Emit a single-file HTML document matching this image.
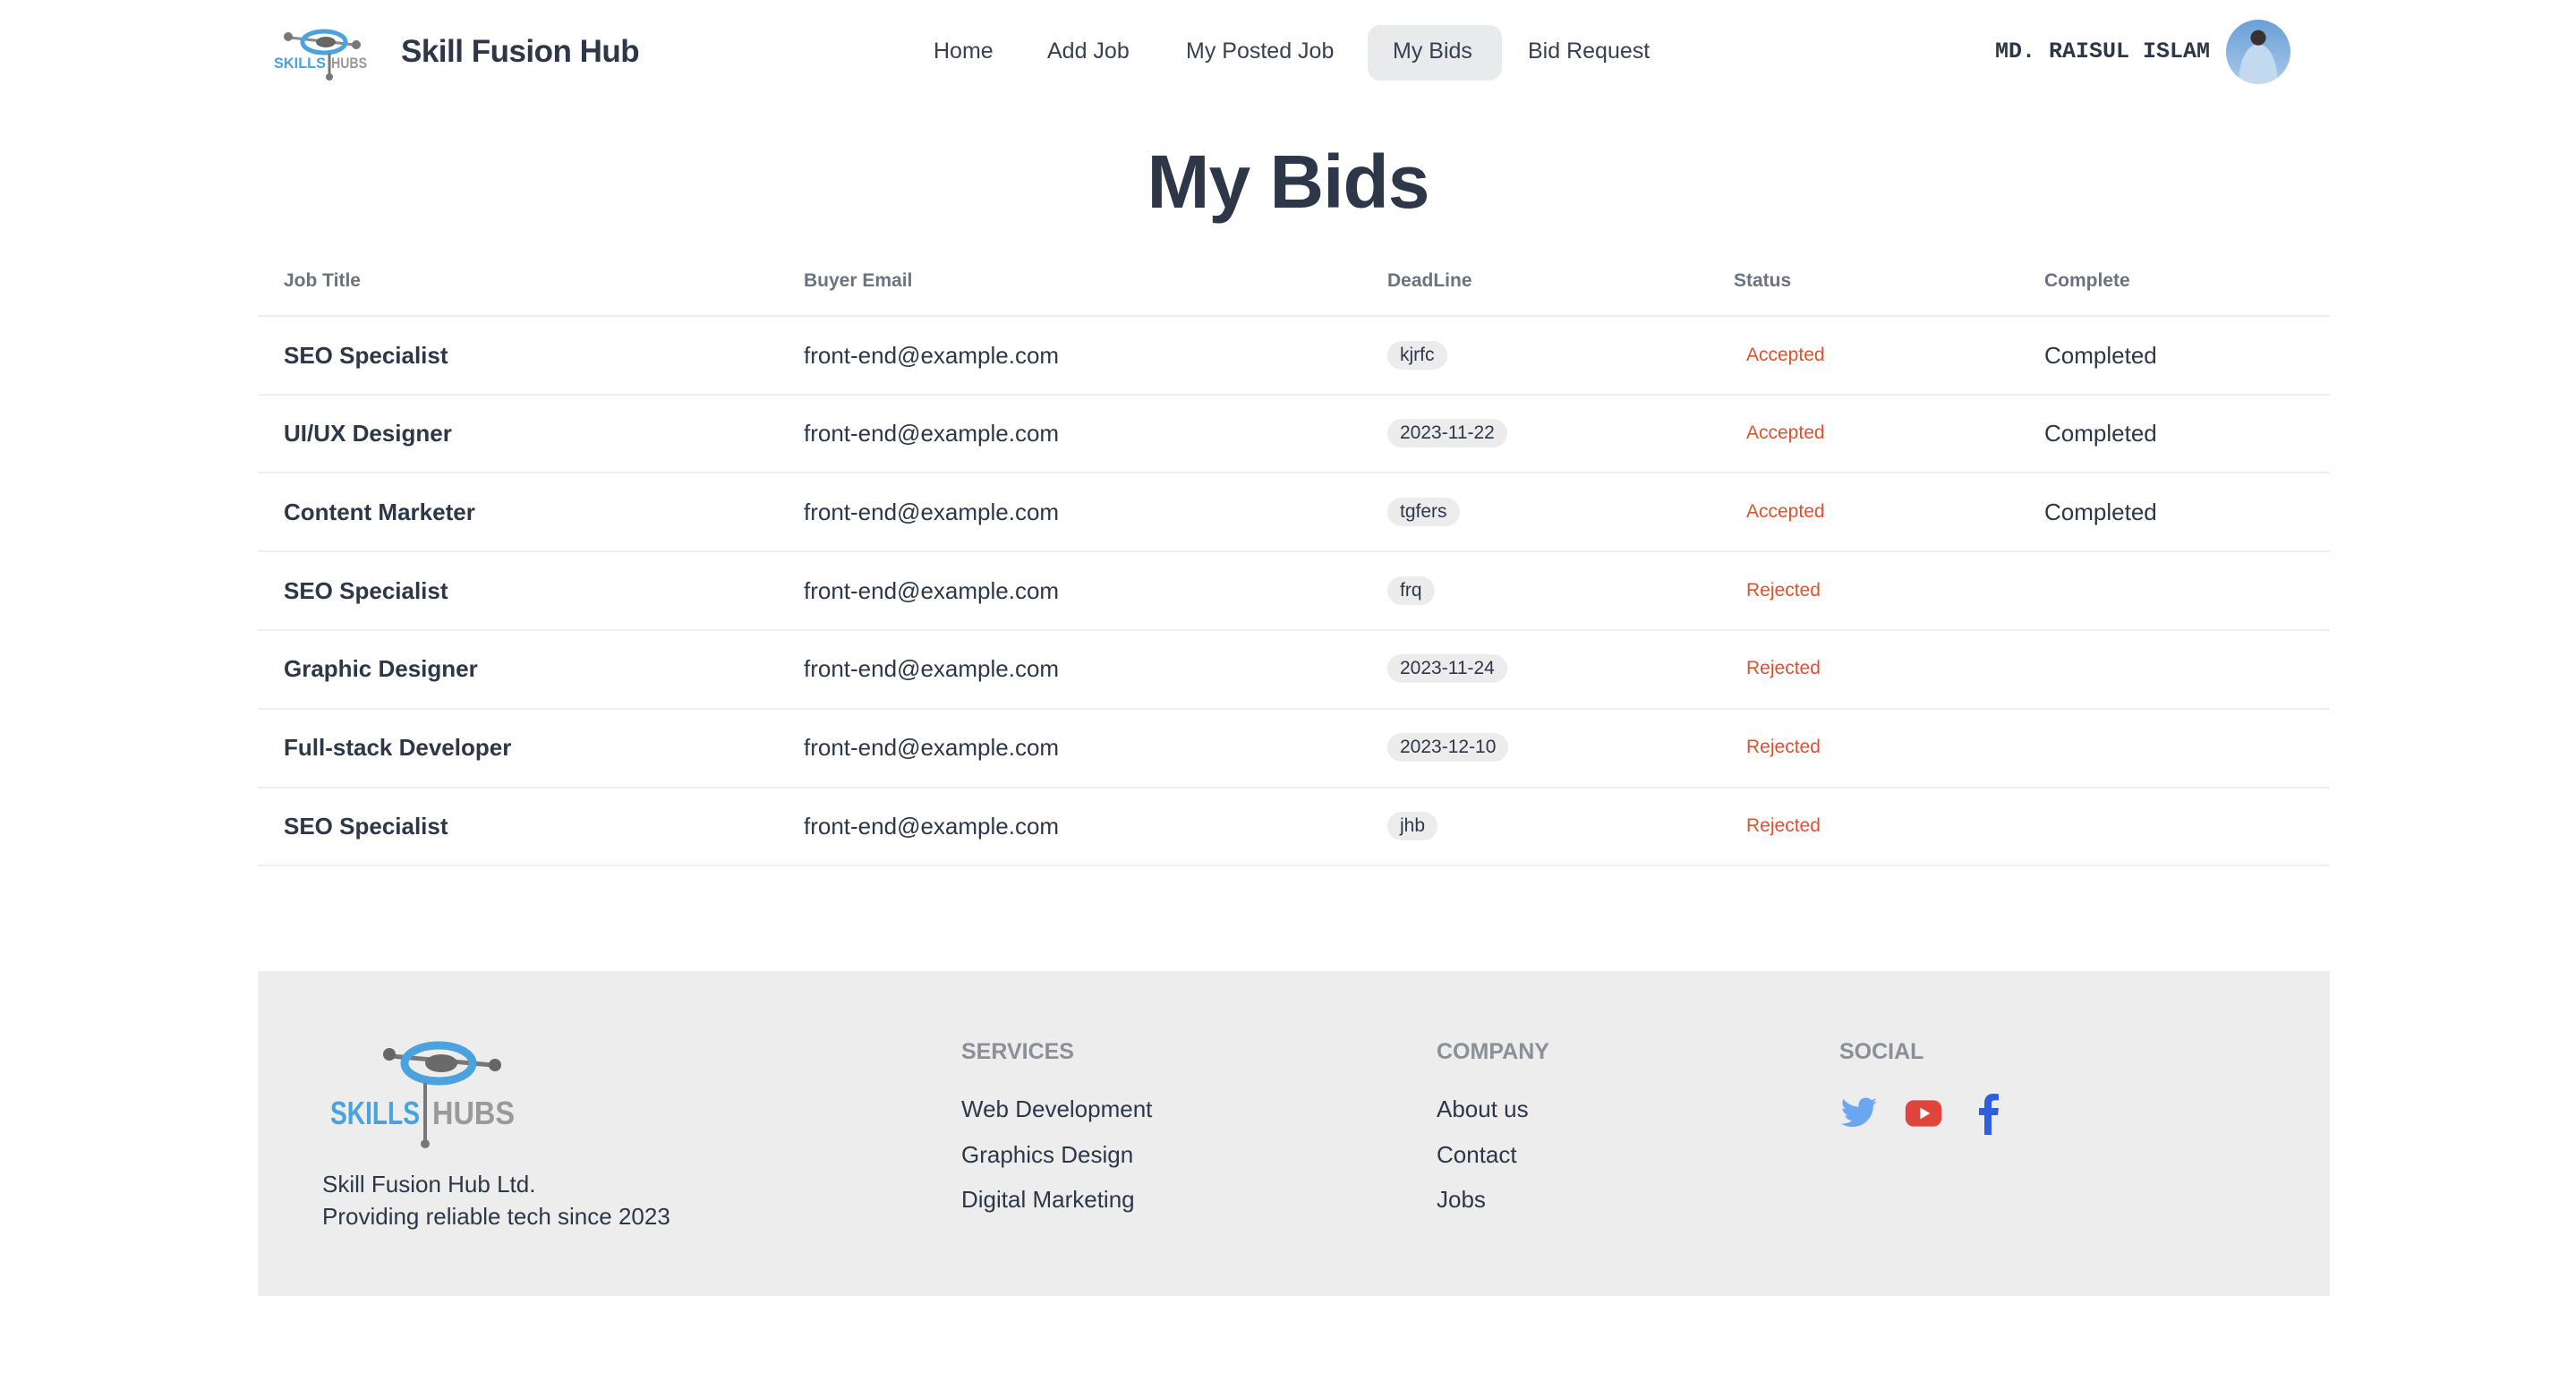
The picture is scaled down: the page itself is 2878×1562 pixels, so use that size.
<!DOCTYPE html>
<html><head><meta charset="utf-8">
<style>
*{margin:0;padding:0;box-sizing:border-box}
body{width:2878px;height:1562px;background:#fff;font-family:"Liberation Sans",Arial,sans-serif;color:#374151;position:relative;overflow:hidden}
.a{position:absolute;white-space:nowrap}
.nav{font-size:25px;top:43px;color:#374151}
.pill{left:1528px;top:28px;width:150px;height:62px;background:#e9eaec;border-radius:14px}
.hd{top:302px;font-size:21px;font-weight:bold;color:#6b7280}
.line{left:288px;width:2315px;height:2px;background:#eeeeee}
.jt{font-size:26px;font-weight:bold;color:#2d3748}
.em{font-size:26px;color:#2d3748}
.bd{font-size:21px;background:#ececec;border-radius:16px;padding:4px 14px;color:#2d3748}
.st{font-size:21px;color:#e0512f}
.fh{font-size:25px;font-weight:bold;color:#8a8f98;top:1161px}
.fl{font-size:26px;color:#2d3748}
</style></head><body>
<svg class="a" style="left:302px;top:28px" width="112" height="62" viewBox="0 0 112 62">
<line x1="22" y1="14" x2="94" y2="22" stroke="#888" stroke-width="3"/>
<circle cx="20" cy="13" r="5" fill="#777"/><circle cx="96" cy="22" r="5" fill="#777"/>
<ellipse cx="60" cy="19" rx="24" ry="12" fill="none" stroke="#4aa3de" stroke-width="5"/>
<ellipse cx="62" cy="19" rx="11" ry="6" fill="#666"/>
<line x1="66" y1="32" x2="66" y2="58" stroke="#777" stroke-width="3"/><circle cx="66" cy="58" r="4" fill="#777"/>
<text x="4" y="48" font-family="Liberation Sans" font-weight="bold" font-size="17" fill="#4aa3de" textLength="58" lengthAdjust="spacingAndGlyphs">SKILLS</text>
<text x="68" y="48" font-family="Liberation Sans" font-weight="bold" font-size="17" fill="#999" textLength="40" lengthAdjust="spacingAndGlyphs">HUBS</text>
</svg>
<div class="a" style="left:448px;top:38px;font-size:35px;font-weight:bold;color:#2d3748;letter-spacing:-0.5px">Skill Fusion Hub</div>
<div class="a pill"></div>
<div class="a nav" style="left:1043px">Home</div>
<div class="a nav" style="left:1170px">Add Job</div>
<div class="a nav" style="left:1325px">My Posted Job</div>
<div class="a nav" style="left:1556px">My Bids</div>
<div class="a nav" style="left:1707px">Bid Request</div>
<div class="a" style="left:2229px;top:43px;font-family:'Liberation Mono',monospace;font-weight:bold;font-size:25px;color:#2d3748">MD. RAISUL ISLAM</div>
<div class="a" style="left:2487px;top:22px;width:72px;height:72px;border-radius:50%;background:radial-gradient(circle at 50% 28%,#3a3030 0 13%,transparent 14%),radial-gradient(ellipse at 50% 95%,#c3d9f0 0 42%,transparent 43%),linear-gradient(#6a9fd6,#a9c9ea)"></div>

<div class="a" style="left:0;width:2878px;text-align:center;top:155px;font-size:84px;font-weight:bold;color:#2d3748;letter-spacing:-1px">My Bids</div>

<div class="a hd" style="left:317px">Job Title</div>
<div class="a hd" style="left:898px">Buyer Email</div>
<div class="a hd" style="left:1550px">DeadLine</div>
<div class="a hd" style="left:1937px">Status</div>
<div class="a hd" style="left:2284px">Complete</div>

<div class="a line" style="top:352px"></div>
<div class="a line" style="top:440px"></div>
<div class="a line" style="top:527px"></div>
<div class="a line" style="top:615px"></div>
<div class="a line" style="top:703px"></div>
<div class="a line" style="top:791px"></div>
<div class="a line" style="top:879px"></div>
<div class="a line" style="top:966px"></div>

<div class="a jt" style="left:317px;top:382px">SEO Specialist</div><div class="a em" style="left:898px;top:382px">front-end@example.com</div><div class="a bd" style="left:1550px;top:381px">kjrfc</div><div class="a st" style="left:1951px;top:385px">Accepted</div><div class="a em" style="left:2284px;top:382px">Completed</div>
<div class="a jt" style="left:317px;top:469px">UI/UX Designer</div><div class="a em" style="left:898px;top:469px">front-end@example.com</div><div class="a bd" style="left:1550px;top:468px">2023-11-22</div><div class="a st" style="left:1951px;top:472px">Accepted</div><div class="a em" style="left:2284px;top:469px">Completed</div>
<div class="a jt" style="left:317px;top:557px">Content Marketer</div><div class="a em" style="left:898px;top:557px">front-end@example.com</div><div class="a bd" style="left:1550px;top:556px">tgfers</div><div class="a st" style="left:1951px;top:560px">Accepted</div><div class="a em" style="left:2284px;top:557px">Completed</div>
<div class="a jt" style="left:317px;top:645px">SEO Specialist</div><div class="a em" style="left:898px;top:645px">front-end@example.com</div><div class="a bd" style="left:1550px;top:644px">frq</div><div class="a st" style="left:1951px;top:648px">Rejected</div>
<div class="a jt" style="left:317px;top:732px">Graphic Designer</div><div class="a em" style="left:898px;top:732px">front-end@example.com</div><div class="a bd" style="left:1550px;top:731px">2023-11-24</div><div class="a st" style="left:1951px;top:735px">Rejected</div>
<div class="a jt" style="left:317px;top:820px">Full-stack Developer</div><div class="a em" style="left:898px;top:820px">front-end@example.com</div><div class="a bd" style="left:1550px;top:819px">2023-12-10</div><div class="a st" style="left:1951px;top:823px">Rejected</div>
<div class="a jt" style="left:317px;top:908px">SEO Specialist</div><div class="a em" style="left:898px;top:908px">front-end@example.com</div><div class="a bd" style="left:1550px;top:907px">jhb</div><div class="a st" style="left:1951px;top:911px">Rejected</div>

<div class="a" style="left:288px;top:1085px;width:2315px;height:363px;background:#ededed"></div>
<svg class="a" style="left:365px;top:1160px" width="220" height="125" viewBox="0 0 220 125">
<line x1="72" y1="20" x2="185" y2="30" stroke="#777" stroke-width="5"/>
<circle cx="70" cy="18" r="7" fill="#666"/><circle cx="188" cy="30" r="7" fill="#666"/>
<ellipse cx="125" cy="28" rx="38" ry="20" fill="none" stroke="#4aa3de" stroke-width="9"/>
<ellipse cx="128" cy="28" rx="18" ry="10" fill="#6a6a6a"/>
<line x1="110" y1="50" x2="110" y2="118" stroke="#777" stroke-width="4"/><circle cx="110" cy="118" r="5" fill="#777"/>
<text x="4" y="96" font-family="Liberation Sans" font-weight="bold" font-size="36" fill="#4aa3de" textLength="100" lengthAdjust="spacingAndGlyphs">SKILLS</text>
<text x="118" y="96" font-family="Liberation Sans" font-weight="bold" font-size="36" fill="#9a9a9a" textLength="92" lengthAdjust="spacingAndGlyphs">HUBS</text>
</svg>
<div class="a fl" style="left:360px;top:1308px">Skill Fusion Hub Ltd.</div>
<div class="a fl" style="left:360px;top:1344px">Providing reliable tech since 2023</div>
<div class="a fh" style="left:1074px">SERVICES</div>
<div class="a fl" style="left:1074px;top:1224px">Web Development</div>
<div class="a fl" style="left:1074px;top:1275px">Graphics Design</div>
<div class="a fl" style="left:1074px;top:1325px">Digital Marketing</div>
<div class="a fh" style="left:1605px">COMPANY</div>
<div class="a fl" style="left:1605px;top:1224px">About us</div>
<div class="a fl" style="left:1605px;top:1275px">Contact</div>
<div class="a fl" style="left:1605px;top:1325px">Jobs</div>
<div class="a fh" style="left:2055px">SOCIAL</div>
<svg class="a" style="left:2055px;top:1222px" width="44" height="44" viewBox="0 0 24 24"><path fill="#6aa7f0" d="M23 4.6c-.8.4-1.7.6-2.6.7.9-.6 1.6-1.4 2-2.5-.9.5-1.9.9-2.9 1.1A4.5 4.5 0 0 0 11.8 8 12.8 12.8 0 0 1 2.5 3.3a4.5 4.5 0 0 0 1.4 6c-.7 0-1.4-.2-2-.6 0 2.2 1.6 4 3.6 4.4-.7.2-1.4.2-2 .1.6 1.8 2.2 3.1 4.2 3.1A9 9 0 0 1 1 18.2 12.8 12.8 0 0 0 7.9 20.2c8.3 0 12.8-6.9 12.8-12.8v-.6c.9-.6 1.7-1.4 2.3-2.2z"/></svg>
<svg class="a" style="left:2126px;top:1222px" width="46" height="44" viewBox="0 0 24 24"><rect x="1" y="4" width="22" height="16" rx="5" fill="#e0453d"/><path d="M10 8.5v7l6-3.5z" fill="#fff"/></svg>
<svg class="a" style="left:2208px;top:1220px" width="26" height="48" viewBox="0 0 12 24"><path fill="#2f5fe0" d="M8 24V13h3.5l.5-4H8V6.6c0-1.1.3-1.9 1.9-1.9H12V1.2C11.6 1.1 10.4 1 9 1 6 1 4 2.8 4 6.2V9H1v4h3v11z"/></svg>
</body></html>
